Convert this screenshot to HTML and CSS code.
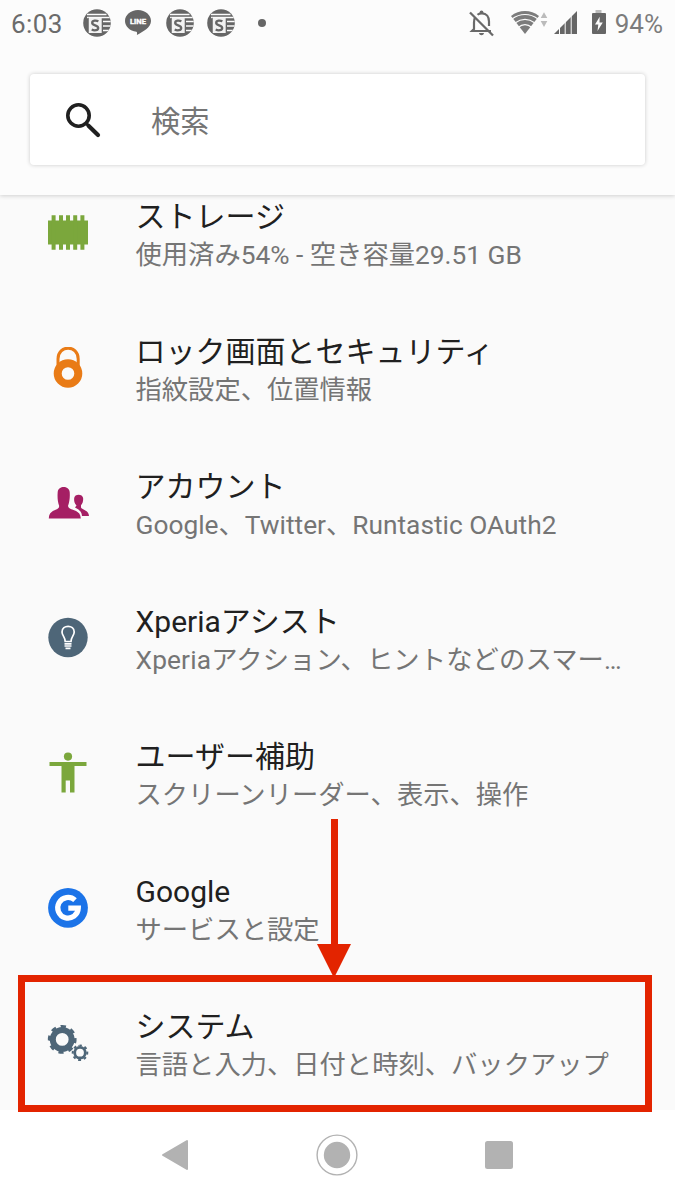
FILE: index.html
```html
<!DOCTYPE html>
<html lang="ja">
<head>
<meta charset="utf-8">
<title>設定</title>
<link rel="stylesheet" href="styles.css">
</head>
<body>
<svg class="defs" aria-hidden="true">
  <symbol id="news" viewBox="0 0 28 28">
    <clipPath id="disc"><circle cx="14" cy="14" r="13.8"/></clipPath>
    <g clip-path="url(#disc)">
      <rect width="28" height="28" fill="#666"/>
      <path d="M4 5.4H23.5M4 8.6H28M20 12.6H28M20 17H28M20 21.6H28" stroke="#fcfcfc" stroke-width="1.5"/>
      <path d="M5.2 8.8H18.7V24H5.2Z" fill="#f2f2f2"/>
      <path d="M5.2 8.8V24" stroke="#666" stroke-width="1"/>
      <path d="M15.4 12.3C13.2 11.3 9.2 11.2 9.2 14C9.2 16.8 15.2 15.9 15.2 18.9C15.2 21.6 11.2 21.8 8.7 20.5" fill="none" stroke="#666" stroke-width="2.3"/>
    </g>
  </symbol>
</svg>
<div class="screen">
  <header class="status">
    <span class="clock">6:03</span>
    <div class="notices">
      <svg width="28" height="28"><use href="#news"/></svg>
      <svg class="line" width="28" height="28" viewBox="0 0 28 28"><path d="M14 1C6.6 1 1 6 1 12C1 17.4 5.8 22 12.4 22.8C13.5 23 13 24.6 12.9 26C19 22.7 27 18.5 27 12C27 6 21.4 1 14 1Z" fill="#666"/><text x="14" y="15.2" text-anchor="middle" class="line-name">LINE</text></svg>
      <svg width="28" height="28"><use href="#news"/></svg>
      <svg width="28" height="28"><use href="#news"/></svg>
    </div>
    <span class="dot"></span>
    <div class="signals">
      <svg class="bell" width="28" height="28" viewBox="0 0 28 28"><g fill="none" stroke="#696969" stroke-width="2.2"><path d="M7 8.5C6.2 10 6 11.5 6 13.5V20L4 22H23M9.5 5.8C11 4.4 12.5 4.4 14 4.4C18.5 4.4 21 8 21 12.5V17"/><path d="M2 3.5L25 26.5" stroke-width="2.3"/></g><path d="M11.5 4C11.5.7 15.5.7 15.5 4ZM11 24H16C15.6 27 11.4 27 11 24Z" fill="#696969"/></svg>
      <svg class="wifi" width="38" height="26" viewBox="0 0 38 26"><path d="M1 6C9-.7 21-.7 29 6L15 24Z" fill="#7c7c7c"/><g fill="none" stroke="#fcfcfc" stroke-width="1.2"><path d="M2 9C10 3 20 3 28 9M5 13C12 8 18 8 25 13M8 17.5C13 13.5 17 13.5 22 17.5"/></g><path d="M30.7 8L34 2.2L37.3 8ZM30.7 11H37.3L34 17Z" fill="#bbb"/></svg>
      <svg class="cell" width="24" height="24" viewBox="0 0 24 24"><path d="M0 23L23 0V23Z" fill="#666"/><path d="M5.5 14V24M11.2 8V24M17.2 2V24" stroke="#fcfcfc" stroke-width="1"/></svg>
      <svg class="battery" width="16" height="26" viewBox="0 0 16 26"><rect x="4.5" y="1" width="6" height="4" fill="#bbb"/><rect x="1" y="4" width="14" height="21" rx="1" fill="#666"/><path d="M8.7 7.8L4 15.5H7.3L6.5 22L11.8 13.4H8.5Z" fill="#fcfcfc"/></svg>
      <span class="percent">94%</span>
    </div>
  </header>
  <div class="search-area">
    <div class="search">
      <svg width="38" height="38" viewBox="0 0 38 38"><circle cx="13.5" cy="13.5" r="10.7" fill="none" stroke="#202020" stroke-width="3.6"/><path d="M21.2 21.2L22.5 23" stroke="#202020" stroke-width="3"/><path d="M23.5 23.7L33 33" stroke="#202020" stroke-width="4.2" stroke-linecap="round"/></svg>
      <span>検索</span>
    </div>
  </div>
  <main class="list">
    <div class="row">
      <svg class="icon" viewBox="0 0 42 42"><path d="M1 8.5H41V32.5H1Z" fill="#7ba73c"/><path d="M6.6 3.3V37.7M14 3.3V37.7M21 3.3V37.7M28.2 3.3V37.7M35.4 3.3V37.7" stroke="#7ba73c" stroke-width="4"/></svg>
      <div class="text"><div class="title">ストレージ</div><div class="sub">使用済み54% - 空き容量29.51 GB</div></div>
    </div>
    <div class="row">
      <svg class="icon" viewBox="0 0 42 42"><path d="M11 20V12C11-2.5 31.2-2.5 31.2 12V20" fill="none" stroke="#e97b16" stroke-width="3"/><circle cx="21" cy="26.5" r="10.3" fill="none" stroke="#e97b16" stroke-width="8"/></svg>
      <div class="text"><div class="title">ロック画面とセキュリティ</div><div class="sub">指紋設定、位置情報</div></div>
    </div>
    <div class="row">
      <svg class="icon" viewBox="0 0 42 42" fill="#a51f64"><path d="M28 25.5L29.5 23.5C27 21 27 18 27.2 16C27.5 11.5 35.7 11.5 36.1 16C36.4 19 35.5 21.5 34 23.2V25.5C35 28 42 28 42 34H35C34.7 29.5 32.5 28 28 25.5Z"/><path d="M12.2 24C10.6 20 10.3 15 10.7 10C11.3 3.3 22 3.3 22.7 10C23.1 15 22.5 20 21 24C22 29.5 33.5 26.3 33.8 36.5H1.8C2 26.3 12.3 29.5 12.2 24Z"/></svg>
      <div class="text"><div class="title">アカウント</div><div class="sub">Google、Twitter、Runtastic OAuth2</div></div>
    </div>
    <div class="row">
      <svg class="icon" viewBox="0 0 42 42"><circle cx="21" cy="20.5" r="19.7" fill="#4e6678"/><g fill="none" stroke="#fff" stroke-width="1.7"><path d="M18.2 24.5C18.2 20 15 18.5 15 15C15 7.5 27.2 7.5 27.2 15C27.2 18.5 24 20 24 24.5Z"/><path d="M17.5 26.8H24.5M17.5 29H24.5M18.5 31.3H23.5"/></g></svg>
      <div class="text"><div class="title">Xperiaアシスト</div><div class="sub wide">Xperiaアクション、ヒントなどのスマー…</div></div>
    </div>
    <div class="row">
      <svg class="icon" viewBox="0 0 42 42" fill="#7ba73c"><circle cx="21" cy="4.6" r="4.1"/><path d="M2.5 10H39.5V14H27.5V40.5H23V28.5H18.7V40.5H14.5V14H2.5Z"/></svg>
      <div class="text"><div class="title">ユーザー補助</div><div class="sub">スクリーンリーダー、表示、操作</div></div>
    </div>
    <div class="row">
      <svg class="icon" viewBox="0 0 42 42"><circle cx="21" cy="20.8" r="19.9" fill="#1b73e8"/><path d="M28 13.2A10.3 10.3 0 1 0 31.3 21.2H21.3" fill="none" stroke="#fff" stroke-width="5.2"/></svg>
      <div class="text"><div class="title">Google</div><div class="sub">サービスと設定</div></div>
    </div>
    <div class="row">
      <svg class="icon" viewBox="0 0 42 42" fill="none" stroke="#4e6678"><circle cx="15.2" cy="17.4" r="9.4" stroke-width="6"/><circle cx="15.2" cy="17.4" r="12.8" stroke-width="3.2" pathLength="80" stroke-dasharray="5 5" transform="rotate(-6 15.2 17.4)" stroke-linejoin="round"/><circle cx="33" cy="30.7" r="5.3" stroke-width="2.8"/><circle cx="33" cy="30.7" r="7.3" stroke-width="2" pathLength="80" stroke-dasharray="5 5" transform="rotate(-8 33 30.7)"/></svg>
      <div class="text"><div class="title">システム</div><div class="sub">言語と入力、日付と時刻、バックアップ</div></div>
    </div>
  </main>
  <nav class="nav">
    <svg width="28" height="32" viewBox="0 0 28 32"><path d="M2 16L26 2V30Z" fill="#b2b2b2" stroke="#b2b2b2" stroke-width="2" stroke-linejoin="round"/></svg>
    <svg width="42" height="42" viewBox="0 0 42 42"><circle cx="21" cy="21" r="19.9" fill="none" stroke="#b2b2b2" stroke-width="1.4"/><circle cx="21" cy="21" r="13.2" fill="#b2b2b2"/></svg>
    <svg width="28" height="28"><rect width="28" height="28" rx="2.5" fill="#b2b2b2"/></svg>
  </nav>
  <svg class="arrow" width="36" height="160" viewBox="0 0 36 160"><path d="M15 0H22V125H35L19 157H17L1 125H15Z" fill="#e32400"/></svg>
  <div class="highlight"></div>
</div>
</body>
</html>
```
FILE: styles.css
```css
* { box-sizing: border-box; }
body { margin: 0; font-family: Roboto, "Noto Sans CJK JP", sans-serif; background: #fafafa; }
svg { display: block; flex: none; }
.defs { position: absolute; width: 0; height: 0; }
.screen { position: relative; width: 675px; height: 1200px; overflow: hidden; display: flex; flex-direction: column; }
.status { height: 46px; display: flex; align-items: center; padding: 0 12px 0 11px; background: #fcfcfc; font-size: 26px; color: #6b6b6b; position: relative; z-index: 2; }
.clock { width: 72px; letter-spacing: .4px; padding-top: 1px; }
.notices { display: flex; gap: 13.3px; }
.line-name { font: bold 7.6px Roboto, sans-serif; fill: #fff; stroke: #fff; stroke-width: .4px; }
.dot { width: 8px; height: 8px; border-radius: 50%; background: #666; margin-left: 23px; }
.signals { margin-left: auto; display: flex; align-items: center; }
.wifi { margin-left: 14px; }
.cell { margin-left: 6px; }
.battery { margin-left: 13px; margin-right: 1px; margin-top: -2px; }
.percent { margin-left: 7px; padding-top: 1px; color: #7c7c7c; }
.search-area { height: 149px; padding: 28px 30px; background: #fcfcfc; box-shadow: 0 1px 4px rgba(0,0,0,.17); position: relative; z-index: 1; }
.search { width: 615px; height: 91px; background: #fff; border-radius: 4px; box-shadow: 0 0 4px rgba(0,0,0,.2); display: flex; align-items: center; padding-left: 35px; gap: 48px; font-size: 29.3px; color: #757575; }
.search span { padding-bottom: 2px; }
.search svg { margin-top: 2px; }
.list { height: 915px; overflow: hidden; }
.row { height: 135px; display: flex; align-items: flex-start; padding: 33px 0 0 46.5px; }
.row:first-child { margin-top: -30px; }
.icon { width: 42px; height: 42px; margin-top: 14px; }
.text { padding-left: 47px; white-space: nowrap; }
.title { font-size: 30px; line-height: 38px; color: #202020; }
.sub { font-size: 26.3px; line-height: 38px; color: #757575; }
.wide { letter-spacing: .14px; }
.nav { height: 90px; background: #fff; display: flex; align-items: center; padding-left: 161px; }
.nav svg:nth-child(2) { margin-left: 127px; }
.nav svg:nth-child(3) { margin-left: 127px; }
.arrow { position: absolute; left: 316px; top: 819px; }
.highlight { position: absolute; left: 18px; top: 975px; width: 634px; height: 137px; border: 7px solid #e32400; }
```
